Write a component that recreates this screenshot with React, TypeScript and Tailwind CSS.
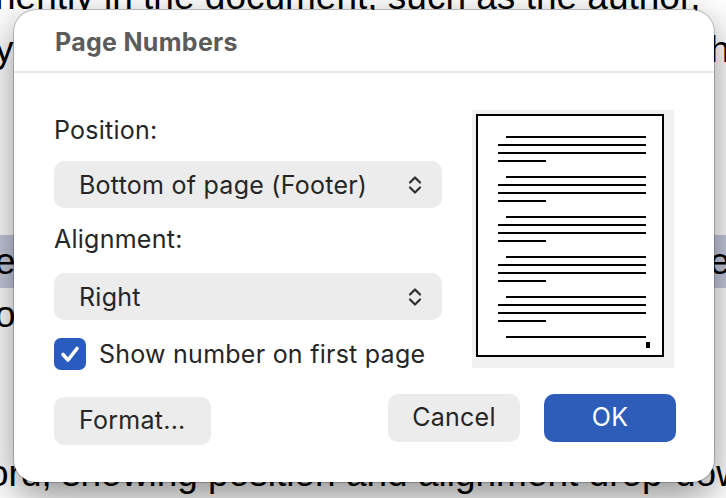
import { ReactNode } from "react";

function UpDownChevron() {
  return (
    <svg width="16" height="22" viewBox="0 0 16 22" fill="none" className="shrink-0">
      <path d="M3 8.5 8 3.5l5 5" stroke="#2e2e2e" strokeWidth="2.2" strokeLinecap="round" strokeLinejoin="round" />
      <path d="M3 13.5l5 5 5-5" stroke="#2e2e2e" strokeWidth="2.2" strokeLinecap="round" strokeLinejoin="round" />
    </svg>
  );
}

function SelectBox({ value }: { value: string }) {
  return (
    <div className="flex h-[47px] w-full items-center justify-between rounded-[10px] bg-[#ececec] pl-[25px] pr-[19px] text-[25px] tracking-[0.25px] text-[#262626]">
      <span className="pt-[2px]">{value}</span>
      <UpDownChevron />
    </div>
  );
}

function PagePreview() {
  const paragraphs = [0, 1, 2, 3, 4];
  return (
    <div className="flex h-[258px] w-[202px] bg-[#f0f0f0] pl-[4px] pt-[4px]">
      <div className="h-[243px] w-[188px] border-2 border-black bg-white">
        <svg width="184" height="239" viewBox="0 0 184 239">
          <g stroke="#000" strokeWidth="2">
            {paragraphs.map((p) => {
              const y = 21 + p * 40;
              return (
                <g key={p}>
                  <line x1="28" y1={y} x2="168" y2={y} />
                  <line x1="20" y1={y + 8} x2="168" y2={y + 8} />
                  <line x1="20" y1={y + 16} x2="168" y2={y + 16} />
                  <line x1="20" y1={y + 24} x2="68" y2={y + 24} />
                </g>
              );
            })}
            <line x1="28" y1="221" x2="168" y2="221" />
          </g>
          <rect x="168" y="226" width="4" height="6" fill="#000" />
        </svg>
      </div>
    </div>
  );
}

function Button({ children, primary, className = "" }: { children: ReactNode; primary?: boolean; className?: string }) {
  return (
    <button
      className={`flex h-[48px] items-center rounded-[10px] text-[25px] tracking-[0.25px] ${
        primary ? "bg-[#2d5cb9] text-white" : "bg-[#ececec] text-[#262626]"
      } ${className}`}
    >
      {children}
    </button>
  );
}

function DocLine({ left, right, highlight }: { left?: string; right?: string; highlight?: boolean }) {
  return (
    <div
      className={`flex h-[53px] items-center justify-between overflow-hidden whitespace-nowrap leading-[53px] ${
        highlight ? "bg-[#c6cadd]" : ""
      }`}
    >
      <span className="-ml-[5px]">{left}</span>
      {right ? <span className="-mr-[4px]">{right}</span> : null}
    </div>
  );
}

export default function App() {
  return (
    <div className="relative h-[498px] w-[726px] overflow-hidden bg-white">
      {/* document behind the dialog */}
      <div className="-mt-[30px] font-['Liberation_Sans',Arial,sans-serif] text-[37px] text-black">
        <div className="h-[53px] overflow-hidden whitespace-nowrap leading-[53px]">
          <span className="-ml-[5px] inline-block">nently in the document, such as the author,</span>
        </div>
        <DocLine left="you can insert" right="th" />
        <DocLine />
        <DocLine />
        <DocLine />
        <DocLine left="e" right="te" highlight />
        <DocLine left="o" />
        <DocLine />
        <DocLine />
        <div className="h-[53px] overflow-hidden whitespace-nowrap leading-[53px]">
          <span className="-ml-[12px] inline-block">ord, showing position and alignment drop-down</span>
        </div>
      </div>

      {/* dialog */}
      <div className="absolute left-[14px] top-[10px] flex h-[472px] w-[700px] flex-col rounded-[22px] bg-white font-['Inter',sans-serif] shadow-[0_14px_40px_rgba(0,0,0,0.45),0_0_0_1px_rgba(0,0,0,0.2)]">
        <div className="flex h-[63px] items-center border-b-2 border-[#e6e6e6] px-[41px] pt-[4px] text-[25px] font-bold tracking-[0.3px] text-[#5c5c5c]">
          Page Numbers
        </div>

        <div className="flex gap-[30px] pl-[40px] pr-[40px]">
          <div className="flex w-[388px] flex-col">
            <div className="mt-[43px] h-[28px] text-[25px] leading-[28px] tracking-[0.25px] text-[#262626]">Position:</div>
            <div className="mt-[17px]">
              <SelectBox value="Bottom of page (Footer)" />
            </div>
            <div className="mt-[17px] h-[28px] text-[25px] leading-[28px] tracking-[0.25px] text-[#262626]">Alignment:</div>
            <div className="mt-[20px]">
              <SelectBox value="Right" />
            </div>
            <label className="mt-[18px] flex h-[32px] items-center gap-[13px] text-[25px] leading-[32px] tracking-[0.25px] text-[#262626]">
              <span className="flex h-[32px] w-[32px] shrink-0 items-center justify-center rounded-[7px] bg-[#2a5bbf]">
                <svg width="32" height="32" viewBox="0 0 32 32" fill="none">
                  <path d="M9 16.5l5 5.5 9-11.5" stroke="#fff" strokeWidth="3.6" strokeLinecap="round" strokeLinejoin="round" />
                </svg>
              </span>
              Show number on first page
            </label>
          </div>
          <div className="mt-[37px]">
            <PagePreview />
          </div>
        </div>

        <div className="mt-[24px] flex items-start justify-between pl-[40px] pr-[38px]">
          <Button className="mt-[3px] w-[157px] pl-[25px]">Format...</Button>
          <div className="flex gap-[24px]">
            <Button className="w-[132px] justify-center">Cancel</Button>
            <Button primary className="w-[132px] justify-center">
              OK
            </Button>
          </div>
        </div>
      </div>
    </div>
  );
}
